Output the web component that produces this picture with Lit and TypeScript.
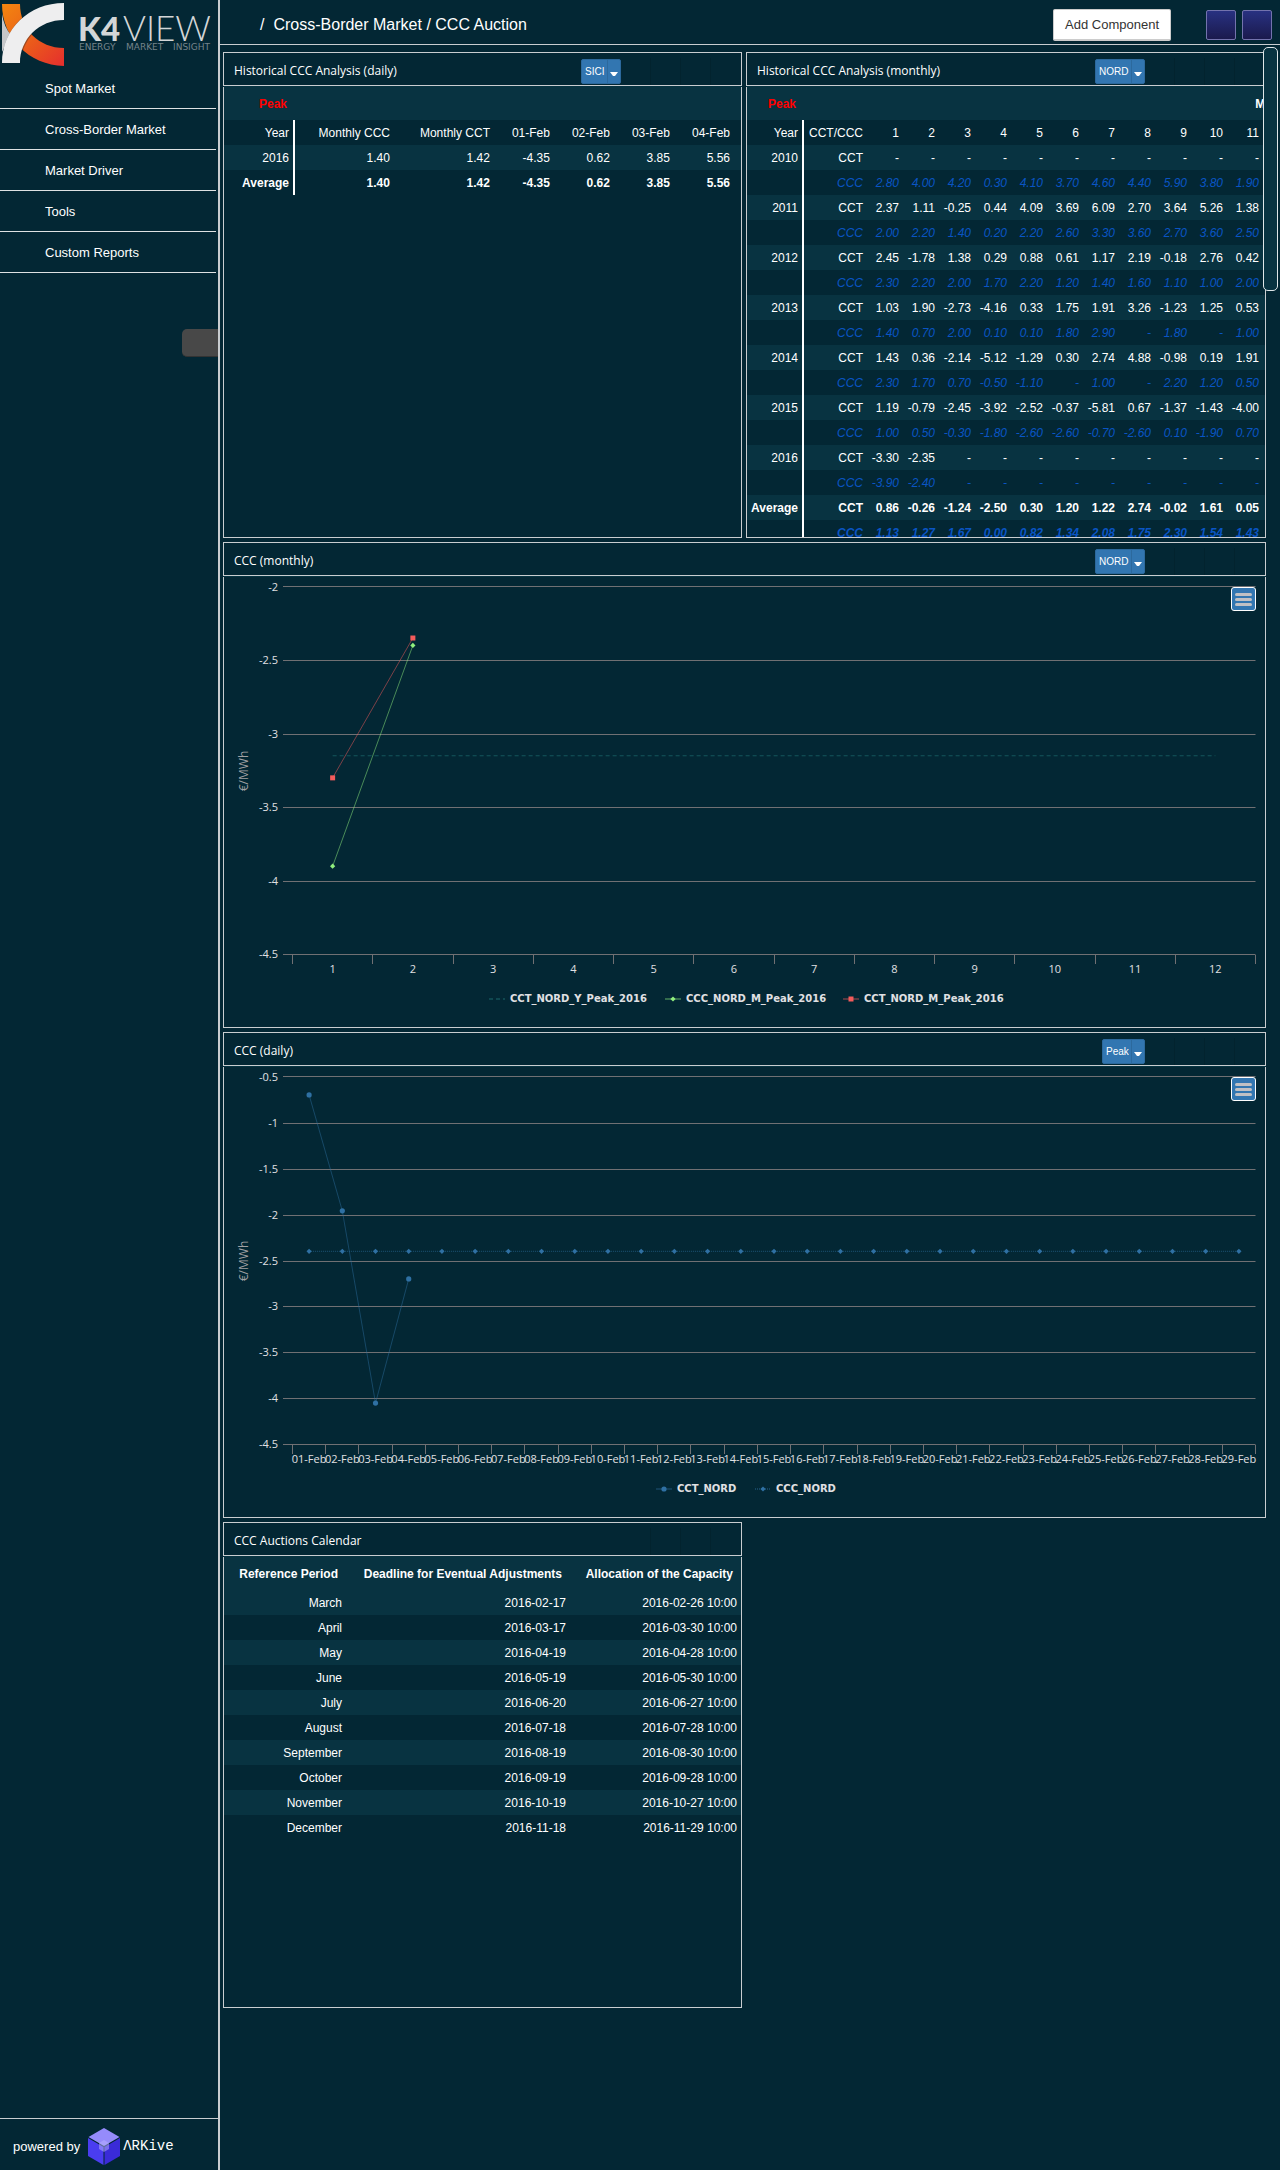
import { LitElement, html, svg, css, nothing } from "lit";
import { customElement, property } from "lit/decorators.js";

const NAV = ["Spot Market", "Cross-Border Market", "Market Driver", "Tools", "Custom Reports"];

const MONTHLY: [string, string, string][] = [
  ["2010", "- - - - - - - - - - -", "2.80 4.00 4.20 0.30 4.10 3.70 4.60 4.40 5.90 3.80 1.90"],
  ["2011", "2.37 1.11 -0.25 0.44 4.09 3.69 6.09 2.70 3.64 5.26 1.38", "2.00 2.20 1.40 0.20 2.20 2.60 3.30 3.60 2.70 3.60 2.50"],
  ["2012", "2.45 -1.78 1.38 0.29 0.88 0.61 1.17 2.19 -0.18 2.76 0.42", "2.30 2.20 2.00 1.70 2.20 1.20 1.40 1.60 1.10 1.00 2.00"],
  ["2013", "1.03 1.90 -2.73 -4.16 0.33 1.75 1.91 3.26 -1.23 1.25 0.53", "1.40 0.70 2.00 0.10 0.10 1.80 2.90 - 1.80 - 1.00"],
  ["2014", "1.43 0.36 -2.14 -5.12 -1.29 0.30 2.74 4.88 -0.98 0.19 1.91", "2.30 1.70 0.70 -0.50 -1.10 - 1.00 - 2.20 1.20 0.50"],
  ["2015", "1.19 -0.79 -2.45 -3.92 -2.52 -0.37 -5.81 0.67 -1.37 -1.43 -4.00", "1.00 0.50 -0.30 -1.80 -2.60 -2.60 -0.70 -2.60 0.10 -1.90 0.70"],
  ["2016", "-3.30 -2.35 - - - - - - - - -", "-3.90 -2.40 - - - - - - - - -"],
  ["Average", "0.86 -0.26 -1.24 -2.50 0.30 1.20 1.22 2.74 -0.02 1.61 0.05", "1.13 1.27 1.67 0.00 0.82 1.34 2.08 1.75 2.30 1.54 1.43"],
];

const CALENDAR = [
  ["March", "2016-02-17", "2016-02-26 10:00"],
  ["April", "2016-03-17", "2016-03-30 10:00"],
  ["May", "2016-04-19", "2016-04-28 10:00"],
  ["June", "2016-05-19", "2016-05-30 10:00"],
  ["July", "2016-06-20", "2016-06-27 10:00"],
  ["August", "2016-07-18", "2016-07-28 10:00"],
  ["September", "2016-08-19", "2016-08-30 10:00"],
  ["October", "2016-09-19", "2016-09-28 10:00"],
  ["November", "2016-10-19", "2016-10-27 10:00"],
  ["December", "2016-11-18", "2016-11-29 10:00"],
];

type Marker = "square" | "diamond" | "circle" | "none";
interface Series {
  name: string;
  color: string;
  opacity: number;
  dash?: string;
  marker: Marker;
  values: number[];
  legendX: number;
}
interface ChartData {
  label: string;
  yLabels: string[];
  yLines: number[];
  categories: string[];
  series: Series[];
}

const MONTHLY_CHART: ChartData = {
  label: "CCC monthly chart",
  yLabels: ["-2", "-2.5", "-3", "-3.5", "-4", "-4.5"],
  yLines: [9.5, 83.5, 157.5, 230.5, 304.5, 377.5],
  categories: Array.from({ length: 12 }, (_, i) => String(i + 1)),
  series: [
    { name: "CCT_NORD_Y_Peak_2016", color: "#2b908f", opacity: 0.45, dash: "4 3", marker: "none", values: Array(12).fill(-3.15), legendX: 265 },
    { name: "CCC_NORD_M_Peak_2016", color: "#90ee7e", opacity: 0.5, marker: "diamond", values: [-3.9, -2.4], legendX: 441 },
    { name: "CCT_NORD_M_Peak_2016", color: "#f45b5b", opacity: 0.5, marker: "square", values: [-3.3, -2.35], legendX: 619 },
  ],
};

const DAILY_CHART: ChartData = {
  label: "CCC daily chart",
  yLabels: ["-0.5", "-1", "-1.5", "-2", "-2.5", "-3", "-3.5", "-4", "-4.5"],
  yLines: [9.5, 56.5, 102.5, 148.5, 194.5, 239.5, 285.5, 331.5, 377.5],
  categories: Array.from({ length: 29 }, (_, i) => `${String(i + 1).padStart(2, "0")}-Feb`),
  series: [
    { name: "CCT_NORD", color: "#2f70a3", opacity: 0.45, marker: "circle", values: [-0.7, -1.96, -4.05, -2.7], legendX: 432 },
    { name: "CCC_NORD", color: "#2f70a3", opacity: 0.6, dash: "1 1", marker: "diamond", values: Array(29).fill(-2.4), legendX: 531 },
  ],
};

@customElement("ccc-chart")
export class CccChart extends LitElement {
  @property({ attribute: false }) data!: ChartData;

  static styles = css`
    :host { display: block; position: relative; }
    svg { display: block; width: 100%; height: auto; }
    .axis { font: 11px "Open Sans", "Noto Sans", sans-serif; fill: #e0e0e3; }
    .unit { font: 12px "Open Sans", "Noto Sans", sans-serif; fill: #a0a0a3; }
    .legend { font: bold 10px "DejaVu Sans", sans-serif; fill: #e0e0e3; }
    .end { text-anchor: end; }
    .mid { text-anchor: middle; }
    .grid { stroke: #707073; stroke-width: 1; }
    .menu {
      position: absolute; top: 10px; right: 9px; width: 25px; height: 24px;
      display: flex; flex-direction: column; align-items: center; justify-content: center; gap: 2px;
      padding: 0; border: 1px solid #fff; border-radius: 3px; background: #3276b1;
    }
    .bar { width: 17px; height: 3px; border-radius: 2px; background: #c0c0c4; }
  `;

  private marker(kind: Marker, x: number, y: number, color: string) {
    if (kind === "square") return svg`<rect x=${x - 2.5} y=${y - 2.5} width="5" height="5" fill=${color}></rect>`;
    if (kind === "circle") return svg`<circle cx=${x} cy=${y} r="2.6" fill=${color}></circle>`;
    if (kind === "diamond") return svg`<path d=${`M${x} ${y - 2.6}L${x + 2.6} ${y}L${x} ${y + 2.6}L${x - 2.6} ${y}Z`} fill=${color}></path>`;
    return nothing;
  }

  render() {
    const d = this.data;
    const left = 68.5;
    const step = 963 / d.categories.length;
    const top = Number(d.yLabels[0]);
    const bottom = Number(d.yLabels[d.yLabels.length - 1]);
    const cx = (i: number) => left + step * (i + 0.5);
    const cy = (v: number) => 9.5 + (368 * (top - v)) / (top - bottom);
    const tick = (i: number) => Math.floor(left + step * i) + 0.5;
    return html`
      <svg viewBox="0 0 1041 450" role="img" aria-label=${d.label}>
        ${d.yLines.map((y, i) => svg`
          <line class="grid" x1="59" x2="1031.5" y1=${y} y2=${y}></line>
          <text class="axis end" x="54" y=${Math.floor(y) + (i ? 4 : 5)}>${d.yLabels[i]}</text>`)}
        ${Array.from({ length: d.categories.length + 1 }, (_, i) => svg`
          <line class="grid" x1=${tick(i)} x2=${tick(i)} y1="378" y2="387"></line>`)}
        ${d.categories.map((c, i) => svg`<text class="axis mid" x=${cx(i)} y="396">${c}</text>`)}
        <text class="unit mid" transform="rotate(-90 24 194)" x="24" y="194">€/MWh</text>
        ${d.series.map((s) => svg`
          <polyline fill="none" stroke=${s.color} stroke-opacity=${s.opacity} stroke-dasharray=${s.dash ?? "none"}
            points=${s.values.map((v, i) => `${cx(i)},${cy(v)}`).join(" ")}></polyline>
          ${s.values.map((v, i) => this.marker(s.marker, cx(i), cy(v), s.color))}
          <line x1=${s.legendX} x2=${s.legendX + 16} y1="422" y2="422" stroke=${s.color} stroke-width="2"
            stroke-opacity=${s.opacity * 0.7} stroke-dasharray=${s.dash ?? "none"}></line>
          ${this.marker(s.marker, s.legendX + 8, 422, s.color)}
          <text class="legend" x=${s.legendX + 21} y="425">${s.name}</text>`)}
      </svg>
      <button class="menu" type="button" aria-label="Chart menu">
        <span class="bar"></span><span class="bar"></span><span class="bar"></span>
      </button>
    `;
  }
}

@customElement("dash-panel")
export class DashPanel extends LitElement {
  @property() heading = "";
  @property() choice = "";

  static styles = css`
    :host { display: flex; flex-direction: column; gap: 1px; min-width: 0; background: #073442; }
    .head {
      flex: none; display: flex; align-items: center; box-sizing: border-box; height: 34px;
      padding: 5px 0 0 10px; border: 1px solid #c9cdd0; background: #032734;
    }
    h2 { flex: 1; margin: 0; padding-bottom: 2px; font: 12px/20px "Open Sans", "Noto Sans", sans-serif; color: #fff; }
    .pick { position: relative; display: flex; }
    select {
      appearance: none; height: 25px; margin: 0; padding: 0 15px 1px 3px;
      border: 1px solid #2c699d; border-radius: 2px; background: #3276b1;
      color: #fff; font: 10px "Liberation Sans", Arial, sans-serif;
    }
    .caret { position: absolute; right: 0; top: 0; width: 15px; height: 25px; pointer-events: none; }
    .slots { flex: none; display: grid; grid-template-columns: repeat(4, 30px); align-self: stretch; }
    .slot { border-right: 1px solid #02232e; }
    .slot:last-child { border-right: 0; }
    .body {
      flex: 1; min-height: 0; box-sizing: border-box; overflow: hidden;
      border: 1px solid #c9cdd0; border-top: 0; background: #032734;
    }
  `;

  render() {
    return html`
      <div class="head">
        <h2>${this.heading}</h2>
        ${this.choice
          ? html`<span class="pick">
              <select aria-label=${this.heading}><option>${this.choice}</option></select>
              <svg class="caret" viewBox="0 0 15 25" aria-hidden="true">
                <path d="M1.5 1V24" stroke="#2c699d"></path>
                <path d="M4 13H12L9 17H7Z" fill="#fff"></path>
              </svg>
            </span>`
          : nothing}
        <span class="slots"><i class="slot"></i><i class="slot"></i><i class="slot"></i><i class="slot"></i></span>
      </div>
      <div class="body"><slot></slot></div>
    `;
  }
}

@customElement("app-root")
export class AppRoot extends LitElement {
  static styles = css`
    :host {
      display: flex; min-height: 100vh; background: #032734; color: #fff;
      font: 12px "Liberation Sans", Arial, sans-serif;
    }
    .side {
      flex: none; width: 218px; display: flex; flex-direction: column;
      border-right: 2px solid #c9cdd0;
    }
    .logo { display: block; width: 218px; height: 68px; }
    .bold { font: 900 33px Lato, sans-serif; fill: #d3d6d7; }
    .thin { font: 300 35px Lato, sans-serif; fill: #d3d6d7; }
    .tag { font: 9px "DejaVu Sans", sans-serif; fill: #75848b; }
    .nav { margin-right: 2px; }
    .link {
      display: block; padding: 2px 0 0 45px; line-height: 38px; font-size: 13px;
      border-bottom: 1px solid #dfe2e3; color: #fff; text-decoration: none;
    }
    .tab {
      align-self: flex-end; width: 36px; height: 28px; margin-top: 56px; padding: 0;
      border: 0; border-bottom: 1px solid #333; border-radius: 5px 0 0 5px; background: #484848;
    }
    .foot {
      margin-top: auto; display: flex; align-items: center; gap: 8px; height: 48px;
      padding: 3px 0 0 13px; border-top: 1px solid #c9cdd0; font-size: 13px;
    }
    .ark { display: flex; align-items: center; gap: 3px; color: #fff; text-decoration: none; }
    .cube { width: 32px; height: 37px; }
    .arkname { font: 14px "Liberation Mono", monospace; }
    .main { position: relative; flex: 1; min-width: 0; }
    .top {
      display: flex; align-items: center; height: 45px; padding: 6px 8px 0 40px; box-sizing: border-box;
      border-bottom: 1px solid #c9cdd0;
    }
    h1 { flex: 1; display: flex; gap: 9px; margin: 0; font-size: 16px; font-weight: normal; }
    .add {
      height: 32px; margin: 0 35px 0 0; padding: 0 11px; border: 1px solid #ccc; border-bottom-width: 2px;
      border-radius: 2px; background: #fff; color: #333; font: 13px "Liberation Sans", Arial, sans-serif;
    }
    .tools { display: flex; gap: 6px; }
    .tool {
      width: 30px; height: 30px; padding: 0; border: 1px solid #7373ad; border-radius: 2px;
      background: linear-gradient(#283181, #1b1a4d);
    }
    .scroll {
      position: absolute; top: 47px; right: 2px; width: 15px; height: 244px; box-sizing: border-box;
      border: 1px solid #dfe6e8; border-radius: 5px; background: #083341;
    }
    .grid {
      display: grid; grid-template-columns: minmax(0, 519fr) minmax(0, 520fr); grid-auto-rows: 486px;
      gap: 4px; padding: 7px 14px 0 3px;
    }
    .wide { grid-column: 1 / -1; }
    table { border-collapse: separate; border-spacing: 0; table-layout: fixed; width: 100%; }
    .months { width: 552px; }
    th, td { box-sizing: border-box; padding: 0 4px 0 0; height: 25px; text-align: right; font-weight: normal; white-space: nowrap; }
    thead th { height: 33px; padding-right: 8px; font-weight: bold; }
    .line th:first-child { border-right: 2px solid #fff; }
    .peak { color: #f00; }
    .lit { background: #083341; }
    .daily .line td { padding-right: 11px; }
    .avg th, .avg td { font-weight: bold; }
    .ccc td { color: #0a55c4; font-style: italic; }
    .w36 { width: 36px; }
    .w57 { width: 57px; }
    .w60 { width: 60px; }
    .w63 { width: 63px; }
    .w71 { width: 71px; }
    .w100 { width: 100px; }
    .w122 { width: 122px; }
    .w171 { width: 171px; }
  `;

  private dailyTable() {
    const cells = ["1.40", "1.42", "-4.35", "0.62", "3.85", "5.56"];
    const heads = ["Monthly CCC", "Monthly CCT", "01-Feb", "02-Feb", "03-Feb", "04-Feb"];
    return html`<table class="daily">
      <colgroup><col class="w71"><col><col class="w100"><col class="w60"><col class="w60"><col class="w60"><col class="w60"></colgroup>
      <thead><tr class="lit"><th class="peak">Peak</th><th colspan="6"></th></tr></thead>
      <tbody>
        <tr class="line"><th>Year</th>${heads.map((h) => html`<td>${h}</td>`)}</tr>
        <tr class="line lit"><th>2016</th>${cells.map((c) => html`<td>${c}</td>`)}</tr>
        <tr class="line avg"><th>Average</th>${cells.map((c) => html`<td>${c}</td>`)}</tr>
      </tbody>
    </table>`;
  }

  private monthlyTable() {
    const months = Array.from({ length: 11 }, (_, i) => i + 1);
    return html`<table class="months">
      <colgroup><col class="w57"><col class="w63">${months.map(() => html`<col class="w36">`)}<col class="w36"></colgroup>
      <thead><tr class="lit"><th class="peak">Peak</th><th></th><th colspan="12">Month</th></tr></thead>
      <tbody>
        <tr class="line"><th>Year</th><td>CCT/CCC</td>${months.map((m) => html`<td>${m}</td>`)}<td></td></tr>
        ${MONTHLY.map(([year, cct, ccc]) => {
          const avg = year === "Average" ? "avg" : "";
          return html`
            <tr class="line lit ${avg}"><th>${year}</th><td>CCT</td>${cct.split(" ").map((v) => html`<td>${v}</td>`)}<td></td></tr>
            <tr class="line ccc ${avg}"><th></th><td>CCC</td>${ccc.split(" ").map((v) => html`<td>${v}</td>`)}<td></td></tr>`;
        })}
      </tbody>
    </table>`;
  }

  private calendarTable() {
    return html`<table>
      <colgroup><col class="w122"><col><col class="w171"></colgroup>
      <thead><tr class="lit"><th>Reference Period</th><th>Deadline for Eventual Adjustments</th><th>Allocation of the Capacity</th></tr></thead>
      <tbody>
        ${CALENDAR.map((row, i) => html`<tr class=${i % 2 ? "" : "lit"}>${row.map((v) => html`<td>${v}</td>`)}</tr>`)}
      </tbody>
    </table>`;
  }

  render() {
    return html`
      <aside class="side">
        <svg class="logo" viewBox="0 0 218 68" role="img" aria-label="K4View Energy Market Insight">
          <defs>
            <linearGradient id="warm" x1="0" y1="0" x2="1" y2="1">
              <stop offset="0" stop-color="#f3860f"></stop><stop offset=".55" stop-color="#ea5a1b"></stop>
              <stop offset="1" stop-color="#e52e2e"></stop>
            </linearGradient>
          </defs>
          <path d="M2 4H20C20 29 39 48 64 48V66C29 65 2 38 2 4Z" fill="url(#warm)"></path>
          <path d="M2 14Q4 27 11 35L2 52Z" fill="#c6c7c9"></path>
          <path d="M64 2V20C40 20 21 40 21 64H2V63C2 29 29 2 64 2Z" fill="#082430" opacity=".35"></path>
          <path d="M64 3V20C39 20 20 39 20 63H2C2 29 29 3 64 3Z" fill="#eeeeef"></path>
          <text class="bold" x="78" y="41">K4</text>
          <text class="thin" x="123" y="41">VIEW</text>
          <text class="tag" x="79" y="50">ENERGY</text>
          <text class="tag" x="126" y="50">MARKET</text>
          <text class="tag" x="173" y="50">INSIGHT</text>
        </svg>
        <nav class="nav">${NAV.map((n) => html`<a class="link" href="#">${n}</a>`)}</nav>
        <button class="tab" type="button" aria-label="Toggle menu"></button>
        <footer class="foot">
          <span>powered by</span>
          <a class="ark" href="#">
            <svg class="cube" viewBox="0 0 32 37" aria-hidden="true">
              <path d="M16 0L31.500 9L16 18L.5 9Z" fill="#958bfb"></path>
              <path d="M0 10L15.500 19V37L0 28Z" fill="#4a3df0"></path>
              <path d="M32 10L16.500 19V37L32 28Z" fill="#3a2bd8"></path>
              <path d="M16 12L21 15V21L16 24L11 21V15Z" fill="#b9b3ff" opacity=".5"></path>
            </svg>
            <span class="arkname">ΛRKive</span>
          </a>
        </footer>
      </aside>
      <main class="main">
        <header class="top">
          <h1><span>/</span><span>Cross-Border Market / CCC Auction</span></h1>
          <button class="add" type="button">Add Component</button>
          <div class="tools">
            <button class="tool" type="button" aria-label="Save"></button>
            <button class="tool" type="button" aria-label="Close"></button>
          </div>
        </header>
        <div class="grid">
          <dash-panel heading="Historical CCC Analysis (daily)" choice="SICI">${this.dailyTable()}</dash-panel>
          <dash-panel heading="Historical CCC Analysis (monthly)" choice="NORD">${this.monthlyTable()}</dash-panel>
          <dash-panel class="wide" heading="CCC (monthly)" choice="NORD"><ccc-chart .data=${MONTHLY_CHART}></ccc-chart></dash-panel>
          <dash-panel class="wide" heading="CCC (daily)" choice="Peak"><ccc-chart .data=${DAILY_CHART}></ccc-chart></dash-panel>
          <dash-panel heading="CCC Auctions Calendar">${this.calendarTable()}</dash-panel>
        </div>
        <div class="scroll"></div>
      </main>
    `;
  }
}
